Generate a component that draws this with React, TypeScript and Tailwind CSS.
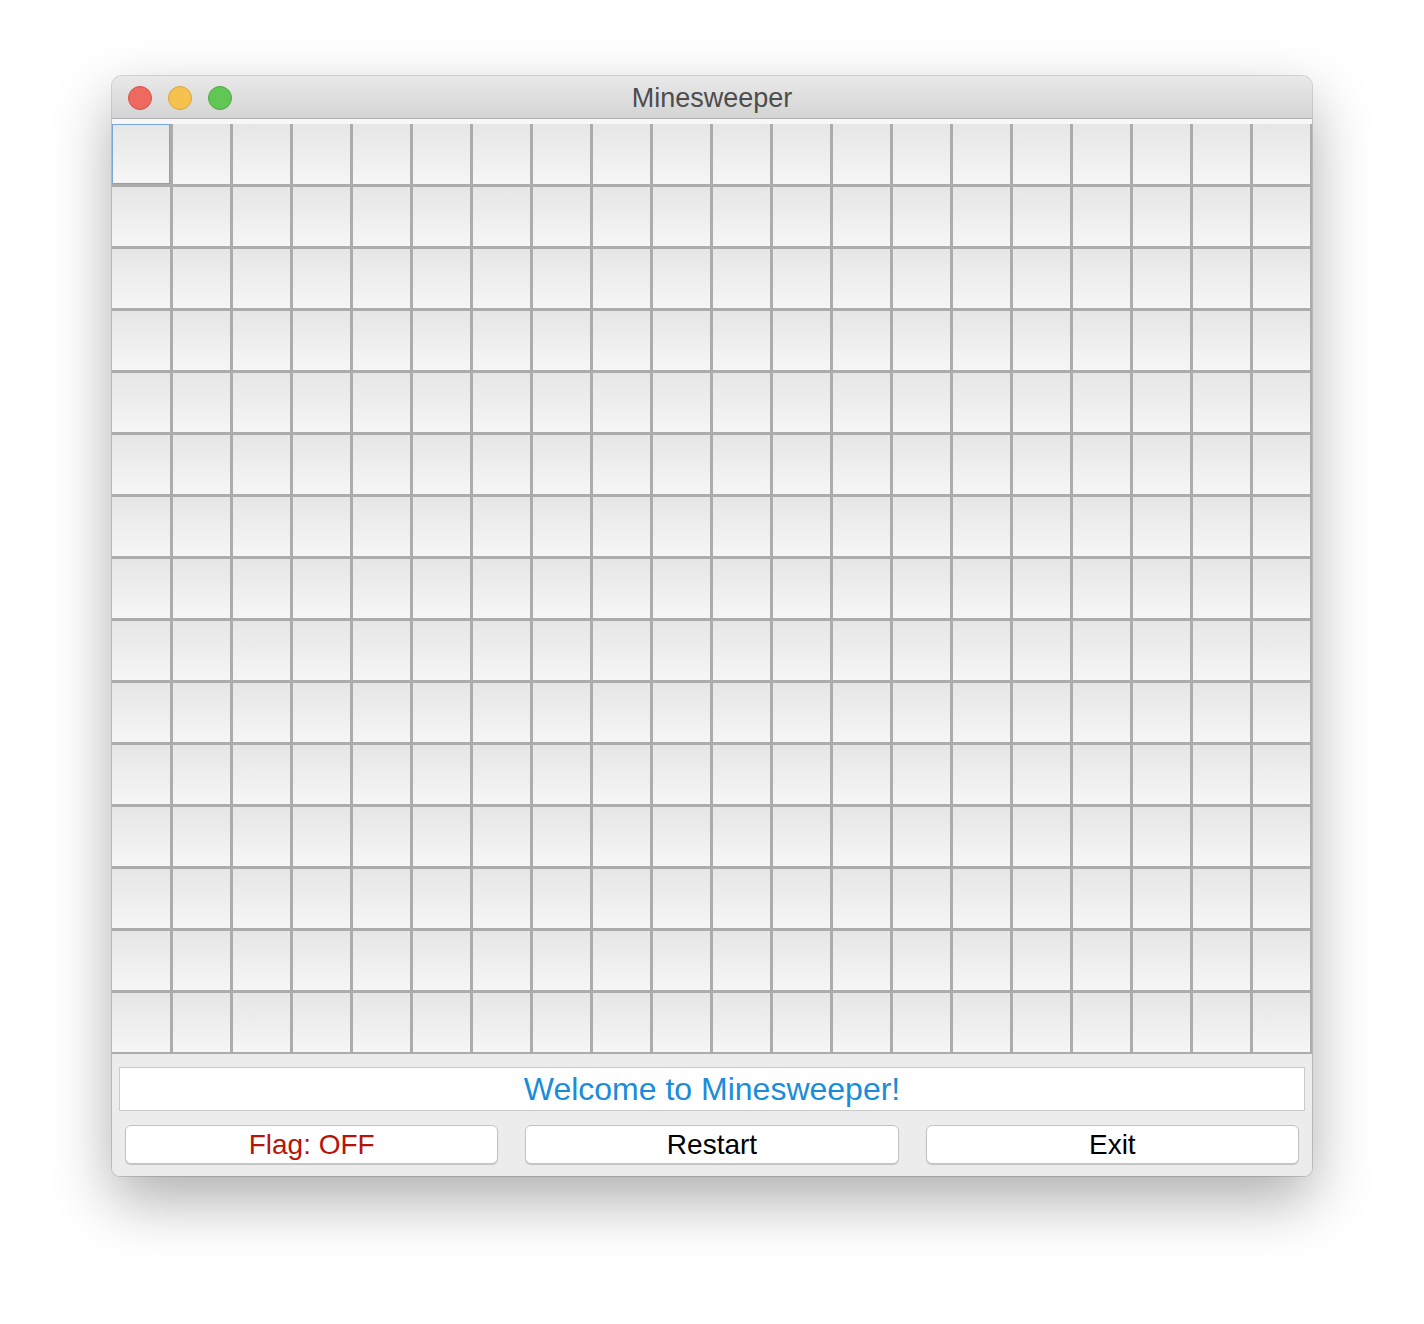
import React from 'react'

const ROWS = 15
const COLS = 20

const Cell = ({ row, col }: { row: number; col: number }) => (
  <div
    className={
      'w-[60px] h-[62px] border-r-2 border-b-2 border-[#acacac] ' +
      (col > 0 ? 'border-l ' : '') +
      (row > 0 ? 'border-t' : '')
    }
  >
    <div
      className={
        'w-full h-full bg-gradient-to-b from-[#e6e6e6] to-[#f6f6f6] ' +
        (row === 0 && col === 0 ? 'border-[1.5px] border-[#7ba6db]' : '')
      }
    />
  </div>
)

const PanelButton = ({ label, color }: { label: string; color: string }) => (
  <button
    className={
      'flex-1 h-[39px] rounded-[6px] bg-white border border-[#c4c4c4] shadow-[0_1px_1px_rgba(0,0,0,0.18)] text-[28px] leading-none flex items-center justify-center ' +
      color
    }
  >
    {label}
  </button>
)

export default function App() {
  const cells = []
  for (let r = 0; r < ROWS; r++) {
    for (let c = 0; c < COLS; c++) {
      cells.push(<Cell key={r + '-' + c} row={r} col={c} />)
    }
  }

  return (
    <div className="w-[1424px] h-[1324px] bg-white pt-[76px] pl-[112px] font-['Liberation_Sans',Arial,sans-serif]">
      <div className="w-[1200px] rounded-t-[10px] rounded-b-[8px] overflow-hidden bg-[#ececec] shadow-[0_0_0_1px_rgba(0,0,0,0.14),0_24px_60px_rgba(0,0,0,0.32)]">
        {/* title bar */}
        <div className="relative h-[43px] bg-gradient-to-b from-[#e9e9e9] to-[#d4d4d4] border-b border-[#b2b2b2] flex items-center justify-center">
          <div className="absolute left-[16px] top-[10px] flex gap-[16px]">
            <span className="w-[24px] h-[24px] rounded-full bg-[#ee6a5f] border border-[#d6534a]" />
            <span className="w-[24px] h-[24px] rounded-full bg-[#f6c14f] border border-[#dca437]" />
            <span className="w-[24px] h-[24px] rounded-full bg-[#62c655] border border-[#4fa940]" />
          </div>
          <span className="text-[27px] text-[#4d4d4d] mt-[2px]">Minesweeper</span>
        </div>
        <div className="h-[5px] bg-[#f7f7f7]" />

        {/* board */}
        <div className="grid grid-cols-[repeat(20,60px)]">{cells}</div>

        {/* bottom panel */}
        <div className="h-[122px] bg-[#ececec] px-[7px] pt-[13px]">
          <div className="h-[44px] bg-white border border-[#cacaca] flex items-center justify-center">
            <span className="text-[32px] text-[#1a8cd9]">Welcome to Minesweeper!</span>
          </div>
          <div className="flex gap-[27px] px-[6px] mt-[14px]">
            <PanelButton label="Flag: OFF" color="text-[#b5140a]" />
            <PanelButton label="Restart" color="text-black" />
            <PanelButton label="Exit" color="text-black" />
          </div>
        </div>
      </div>
    </div>
  )
}
